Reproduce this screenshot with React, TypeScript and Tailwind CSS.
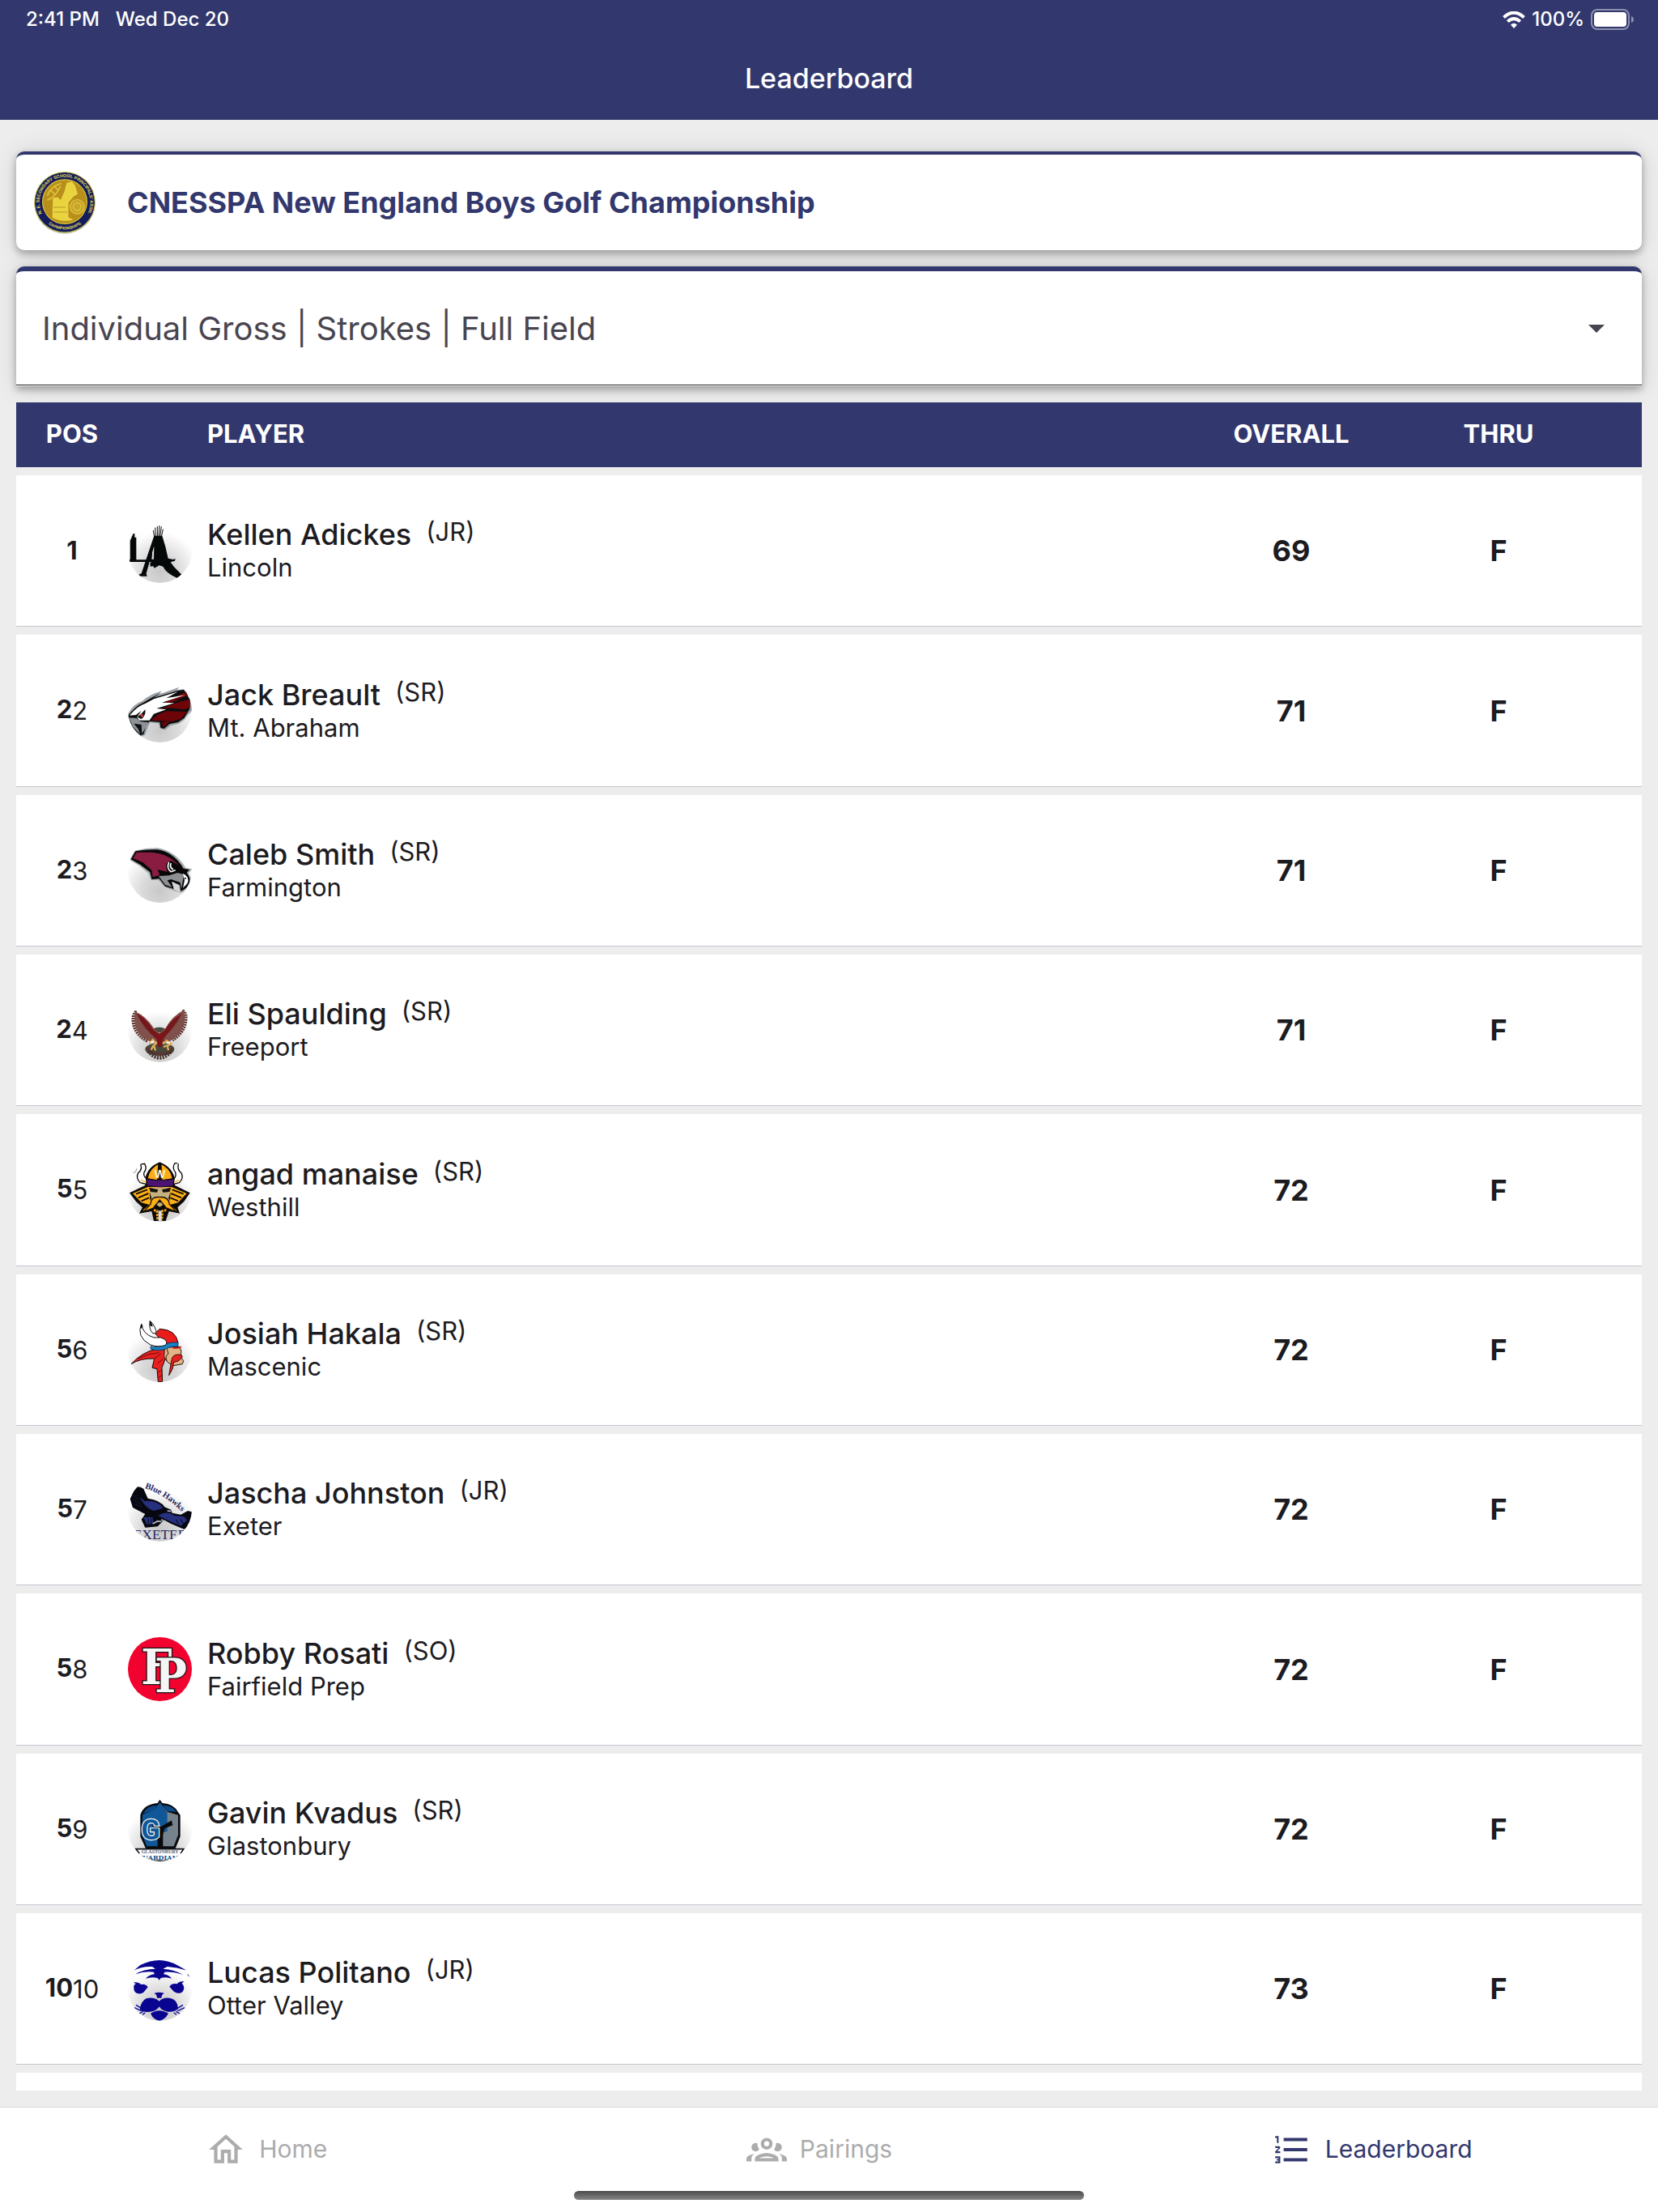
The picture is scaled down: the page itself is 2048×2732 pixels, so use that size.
import type { ReactNode } from "react";

function Mark({ top, id, shade = true, children }: { top: number; id: string; shade?: boolean; children: ReactNode }) {
  return (
    <svg viewBox={`54 ${top} 237 237`} className="size-[79px] rounded-full" aria-hidden="true">
      {shade && (
        <>
          <radialGradient id={id} cx="0.5" cy="0.82" r="0.62">
            <stop offset="0" stopColor="#c8c8c8" />
            <stop offset="0.45" stopColor="#dadada" />
            <stop offset="1" stopColor="#ffffff" />
          </radialGradient>
          <rect x="54" y={top} width="237" height="237" fill={`url(#${id})`} />
        </>
      )}
      {children}
    </svg>
  );
}

const lincoln = (
  <Mark top={30} id="m1">
    <text x="44" y="188" fontFamily="Liberation Serif" fontWeight="700" fontSize="160" fill="#050808">L</text>
    <path d="M50 60 H78 L74 84 L62 112 V180 H50 Z M79 78 H112 V98 H79 Z" fill="#fdfdfd" />
    <path
      d="M151 92 L181 92 Q194 130 203 176 L222 180 L230 177 L228 185 L212 190 L224 206 L253 236 L237 249 Q216 240 202 229 Q190 218 184 206 L170 202 L152 212 L148 205 L137 206 L136 194 L142 186 L134 180 L150 179 L151 130 L122 232 L125 242 L95 242 L94 236 L104 232 Z"
      fill="#050808"
    />
    <path d="M152 95 L148 72 M157 95 L155 62 M163 95 L163 57 M168 95 L171 54 M173 95 L178 58 M178 95 L184 68" stroke="#050808" strokeWidth="3" />
  </Mark>
);

const abraham = (
  <Mark top={621} id="m2">
    <path d="M54 752 Q75 715 108 704 Q135 680 180 667 L168 680 L244 653 L236 664 L262 660 L291 690 V738 L288 745 L275 757 L262 775 L243 788 L212 796 L192 812 L172 806 L168 788 L136 784 L128 800 L118 830 L98 838 L54 800 Z" fill="#9aa1a6" />
    <path d="M54 760 Q80 724 110 711 Q145 688 178 674 L150 692 L238 666 L262 663 L284 700 L283 734 L262 768 L240 783 L208 790 L188 807 L175 804 L172 783 L134 780 L122 794 L112 828 L100 832 L70 803 Z" fill="#0b0d0e" />
    <path d="M270 668 L278 684 L226 702 L258 700 L180 716 Z M284 698 L284 730 L262 736 L210 730 L178 734 Q230 708 284 698 Z M274 744 L250 770 L222 780 L140 776 L162 756 L196 742 Z M178 783 L210 780 L186 802 Z" fill="#6d0508" />
    <path d="M60 758 Q90 722 118 714 L150 697 L240 670 L196 694 L268 682 L180 710 L226 712 L160 732 L196 736 L150 752 L134 776 L96 776 L88 764 L104 740 L84 756 Z" fill="#ffffff" />
    <path d="M58 766 L86 768 L100 780 L130 784 L118 806 L106 826 L104 792 L76 788 L92 808 L100 828 L72 800 Z" fill="#8b9195" />
    <path d="M90 763 Q106 752 118 736 Q122 756 106 770 Q96 772 90 763 Z" fill="#0b0d0e" />
    <circle cx="106" cy="758" r="6" fill="#c33b3b" />
  </Mark>
);

const farmington = (
  <Mark top={1218} id="m3">
    <path d="M60 1296 L78 1262 Q120 1252 162 1252 Q230 1262 268 1326 L292 1330 L278 1346 Q292 1362 286 1386 Q278 1412 250 1418 L222 1410 L190 1396 L166 1370 L140 1372 L130 1346 L96 1318 Z" fill="#a5aaad" />
    <path d="M65 1294 L82 1264 Q124 1256 164 1258 Q222 1266 260 1328 L282 1332 L272 1344 Q290 1364 280 1386 Q270 1406 249 1412 L246 1390 L218 1376 L224 1404 L192 1394 L170 1366 L142 1368 L136 1342 L100 1314 Z" fill="#080809" />
    <path d="M73 1290 L86 1268 L142 1268 Q208 1274 244 1318 L216 1300 Q186 1300 200 1340 L164 1332 L172 1352 L146 1360 L142 1334 L110 1306 Z" fill="#8a1c42" />
    <path d="M206 1304 Q196 1330 214 1340 L230 1334 M214 1308 q-8 16 8 24" fill="none" stroke="#fff" strokeWidth="5" />
    <path d="M168 1356 L206 1354 L238 1344 L262 1350 Q256 1380 252 1404 L248 1380 L214 1368 L200 1372 L218 1398 L192 1388 Z" fill="#8d9194" />
    <path d="M258 1346 Q286 1360 274 1384 L258 1400 L264 1372 Z" fill="#fff" />
    <path d="M216 1378 L244 1390 L248 1416 L226 1406 Z" fill="#d6d6d6" />
    <circle cx="267" cy="1364" r="3" fill="#111" />
  </Mark>
);

const freeport = (
  <Mark top={39} id="m4">
    <ellipse cx="172" cy="228" rx="54" ry="24" fill="#46483c" />
    <path d="M122 222 Q172 270 222 222" fill="none" stroke="#5d3630" strokeWidth="8" />
    <path d="M130 234 Q172 284 216 232" fill="none" stroke="#40312c" strokeWidth="16" strokeDasharray="6 4" />
    <ellipse cx="170" cy="156" rx="24" ry="10" fill="#4a4a40" />
    <path d="M80 84 Q60 160 128 196 M262 80 Q282 150 218 192" fill="none" stroke="#5b302b" strokeWidth="16" strokeDasharray="6 3" />
    <path d="M80 88 Q120 104 150 150 L170 168 L192 152 Q218 104 262 82 Q280 158 206 200 L140 200 Q68 174 80 88 Z" fill="#80504a" />
    <path d="M84 94 Q122 112 148 156 L170 172 L190 158 Q214 116 254 96 Q226 142 200 170 L186 190 L178 220 H166 L160 190 Q116 152 84 94 Z" fill="#7b1519" />
    <path d="M96 112 Q120 160 158 184 M246 108 Q222 156 186 182 M108 116 Q130 152 154 168 M236 114 Q216 146 192 166" fill="none" stroke="#5c2020" strokeWidth="2" />
    <path d="M134 208 L146 192 L158 206 L150 214 L156 232 M148 214 L140 230 M184 208 L198 196 L214 208 L200 214 L204 232 M196 214 L186 220" fill="none" stroke="#dfae58" strokeWidth="7" />
    <path d="M138 202 l12 -4 M198 202 l12 2" stroke="#fff" strokeWidth="5" />
  </Mark>
);

const westhill = (
  <Mark top={630} id="m5">
    <path d="M60 760 L118 732 V708 Q126 664 172 646 Q218 664 228 708 V732 L284 760 L262 792 L238 814 L246 836 L206 828 L194 864 H150 L142 828 L96 836 L108 814 L84 792 Z" fill="#0c0906" />
    <path d="M72 762 L128 738 H216 L272 762 L240 796 L210 804 L236 826 L210 822 L178 790 H166 L134 822 L108 826 L134 804 L104 796 Z" fill="#fcae17" />
    <path d="M84 764 L126 748 M92 778 L130 762 M104 790 L132 778 M260 764 L218 748 M252 778 L214 762 M240 790 L212 778" stroke="#14100a" strokeWidth="6" />
    <path d="M128 706 Q134 668 172 652 Q212 668 218 706 L172 714 Z" fill="#fcae17" />
    <path d="M166 650 H178 L182 712 H162 Z" fill="#0c0906" />
    <text x="172" y="704" textAnchor="middle" fontFamily="Liberation Sans" fontWeight="700" fontSize="44" fill="#fff" stroke="#fcae17" strokeWidth="1">W</text>
    <path d="M122 708 Q172 718 226 708 L224 734 Q172 742 126 734 Z" fill="#4b1372" stroke="#170820" strokeWidth="3" />
    <path d="M134 740 H212 L206 790 L172 812 L140 790 Z" fill="#c5b07f" />
    <path d="M132 740 L166 748 L162 758 L138 756 Z M214 740 L180 748 L184 758 L208 756 Z M160 788 H186 L178 796 H166 Z M134 756 L142 780 L136 788 Z M212 756 L204 780 L210 788 Z" fill="#16100a" />
    <path d="M138 802 Q140 772 170 776 Q204 772 208 802 L234 830 L196 816 L172 786 L148 816 L112 830 Z" fill="#fcae17" stroke="#16100a" strokeWidth="4" />
    <path d="M150 824 L162 826 L164 862 M196 824 L182 826 L180 862" stroke="#fcae17" strokeWidth="8" strokeDasharray="8 4" fill="none" />
    <path d="M167 826 h12 v38 h-12z" fill="#ddd" />
    <path d="M122 706 L124 728 L100 722 Q82 706 92 686 Q110 672 100 654 L116 652 Q126 668 114 684 Q110 698 122 706 Z M226 706 L222 728 L244 722 Q262 706 252 686 Q234 672 242 650 L228 650 Q216 668 230 684 Q234 698 226 706 Z" fill="#fff" stroke="#0c0906" strokeWidth="4" />
    <path d="M102 712 l18 8 M244 712 l-18 8" stroke="#fcae17" strokeWidth="4" />
    <path d="M72 684 q12 4 14 -14" fill="none" stroke="#8b8b96" strokeWidth="3" />
  </Mark>
);

const mascenic = (
  <Mark top={48} id="m6">
    <path d="M66 218 Q104 176 158 162 L196 160 L192 200 L180 232 L182 284 H166 L162 236 L144 232 L152 198 Q100 196 66 218 Z" fill="#e8201f" stroke="#1a0808" strokeWidth="3" />
    <path d="M90 198 Q130 178 170 176 M152 198 L176 180 M164 216 L184 200 M166 250 l14 -12 M168 268 l14 -10" stroke="#6d0d0e" strokeWidth="3" fill="none" />
    <path d="M190 156 L246 154 L252 172 L248 190 L260 206 L256 218 L222 224 L202 212 L188 192 Z" fill="#e3b486" stroke="#2b1a12" strokeWidth="3" />
    <path d="M198 160 l6 20 q-14 8 -6 26" fill="none" stroke="#2b1a12" strokeWidth="3" />
    <path d="M252 184 Q220 178 216 202 L206 260 Q224 236 224 210 Q238 214 256 192 Z" fill="#e8201f" stroke="#3b0a0a" strokeWidth="3" />
    <path d="M214 158 L254 152 L248 160 L226 162 Z" fill="#c91919" />
    <path d="M154 104 L172 88 Q232 90 240 140 L192 146 Z" fill="#ea1c1c" stroke="#200808" strokeWidth="3" />
    <path d="M190 144 Q214 136 240 138 L240 153 Q210 152 190 164 Q160 172 138 162 V152 Q170 160 190 144 Z" fill="#1581c6" stroke="#0a1c30" strokeWidth="2" />
    <path d="M104 68 Q108 108 150 120 L176 120 Q206 130 194 148 Q164 158 136 146 Q84 118 104 68 Z M136 58 Q156 76 160 104 L146 104 Q130 88 136 58 Z" fill="#fff" stroke="#111" strokeWidth="3" />
    <path d="M134 58 q10 6 12 22 l-10 -4 z M102 68 l8 10 l-8 10 z" fill="#111" />
  </Mark>
);

const exeter = (
  <Mark top={645} id="m7">
    <path d="M62 724 L82 680 Q96 676 112 686 L128 722 Q174 728 190 754 L214 764 L218 776 L250 782 L276 768 L292 772 L284 826 L262 836 L214 816 L188 802 L164 826 L118 830 L104 800 L118 780 L72 756 Z" fill="#07080f" />
    <path d="M98 716 L116 732 Q164 728 184 758 L150 768 Q118 760 98 716 Z M166 786 Q196 764 226 786 L264 790 L272 804 L250 824 L204 804 Z M112 792 L146 792 L148 816 L124 818 Z" fill="#27307e" />
    <path d="M70 708 l24 18 M72 724 l26 18 M78 742 l30 12 M130 796 v22 M140 796 v20 M232 800 l12 22 M248 798 l12 20 M264 790 l14 16" stroke="#10132e" strokeWidth="4" />
    <path d="M146 816 l18 -10 l14 2 M178 800 l10 8 M200 768 l14 2" stroke="#b9bcc5" strokeWidth="5" fill="none" />
    <path id="hawk-arc" d="M116 684 Q190 706 262 780" fill="none" />
    <text fontFamily="Liberation Serif" fontWeight="700" fontSize="32" fill="#25275f">
      <textPath href="#hawk-arc">Blue Hawks</textPath>
    </text>
    <text x="174" y="874" textAnchor="middle" fontFamily="Liberation Serif" fontSize="52" fill="#25275f">EXETER</text>
  </Mark>
);

const fairfield = (
  <Mark top={65} id="m8" shade={false}>
    <rect x="54" y="65" width="237" height="237" fill="#f2022f" />
    <g fontFamily="DejaVu Serif Condensed, DejaVu Serif" fontWeight="700" fill="#f5f5f5" stroke="#1c1416" strokeWidth="8" paintOrder="stroke" strokeLinejoin="miter">
      <text x="103" y="238" fontSize="180">F</text>
      <text x="154" y="268" fontSize="176">P</text>
    </g>
  </Mark>
);

const glastonbury = (
  <Mark top={655} id="m9">
    <path d="M172 663 L182 676 Q224 678 240 710 L248 720 V800 L230 844 H120 L100 800 V720 Q112 680 164 676 Z" fill="#0a0c0f" />
    <path d="M110 714 Q126 684 162 684 L150 704 Z M184 684 Q218 684 234 708 L200 706 Z" fill="#0d4c8c" />
    <path d="M172 674 L200 708 L240 720 V794 L224 836 H184 V790 L176 782 Z" fill="#77838c" />
    <path d="M172 674 L150 702 L108 718 V796 L124 836 H164 V790 L176 786 L200 780 V712 Z" fill="#0f5796" />
    <path d="M140 752 L176 764 L216 740 L220 758 L190 770 L182 800 V840 H170 V800 Z" fill="#080a0c" />
    <text x="103" y="812" fontFamily="Roboto" fontWeight="700" fontSize="104" fill="#0f5796" stroke="#fff" strokeWidth="7" paintOrder="stroke">G</text>
    <path d="M84 846 H260 L250 862 L256 872 H90 L96 862 Z" fill="#fff" stroke="#101318" strokeWidth="5" />
    <text x="173" y="861" textAnchor="middle" fontFamily="Liberation Serif" fontWeight="700" fontSize="18" fill="#59636c">GLASTONBURY</text>
    <rect x="96" y="863" width="154" height="30" fill="#fff" />
    <text x="172" y="885" textAnchor="middle" fontFamily="DejaVu Serif" fontWeight="700" fontSize="24" fill="#134f8c">GUARDIANS</text>
    <path d="M134 890 H206" stroke="#101318" strokeWidth="5" />
  </Mark>
);

const otter = (
  <Mark top={1252} id="m10">
    <g fill="#0a0590">
      <path d="M100 1282 Q136 1264 170 1264 Q204 1264 240 1284 L272 1302 Q236 1290 200 1288 L184 1296 Q226 1298 258 1318 Q222 1306 190 1308 L186 1316 Q206 1318 216 1332 Q196 1324 176 1330 L170 1338 L164 1330 Q142 1324 120 1332 Q132 1318 152 1316 L150 1308 Q116 1304 82 1316 Q112 1296 156 1296 L144 1288 Q104 1286 76 1302 Z" />
      <path d="M74 1346 Q94 1344 102 1354 Q120 1350 128 1364 L118 1376 Q110 1390 94 1388 Q76 1386 76 1368 Q74 1354 84 1352 Z M262 1342 Q244 1342 236 1352 Q216 1348 208 1362 L220 1376 Q230 1388 246 1386 Q260 1384 262 1366 Q260 1354 254 1350 Z" />
      <path d="M152 1386 Q170 1380 188 1386 L180 1394 L178 1404 H162 L160 1394 Z" />
      <path d="M170 1416 Q150 1398 122 1406 Q102 1416 98 1446 Q112 1460 144 1454 Q162 1450 170 1436 Q180 1452 202 1455 Q230 1456 240 1444 Q238 1410 212 1405 Q186 1400 170 1416 Z" />
      <path d="M138 1462 Q170 1440 204 1462 Q188 1488 170 1488 Q150 1486 138 1462 Z" />
    </g>
    <path d="M78 1440 l26 12 M84 1430 l20 12 M96 1462 l14 -8 M108 1466 l10 -8 M264 1440 l-26 12 M258 1430 l-20 12 M246 1462 l-14 -8 M234 1466 l-10 -8" stroke="#0a0590" strokeWidth="4" />
    <path d="M276 1316 l6 8" stroke="#0a0590" strokeWidth="4" />
  </Mark>
);

const players = [
  { pos: "1", order: "", name: "Kellen Adickes", year: "JR", school: "Lincoln", score: 69, logo: lincoln },
  { pos: "2", order: "2", name: "Jack Breault", year: "SR", school: "Mt. Abraham", score: 71, logo: abraham },
  { pos: "2", order: "3", name: "Caleb Smith", year: "SR", school: "Farmington", score: 71, logo: farmington },
  { pos: "2", order: "4", name: "Eli Spaulding", year: "SR", school: "Freeport", score: 71, logo: freeport },
  { pos: "5", order: "5", name: "angad manaise", year: "SR", school: "Westhill", score: 72, logo: westhill },
  { pos: "5", order: "6", name: "Josiah Hakala", year: "SR", school: "Mascenic", score: 72, logo: mascenic },
  { pos: "5", order: "7", name: "Jascha Johnston", year: "JR", school: "Exeter", score: 72, logo: exeter },
  { pos: "5", order: "8", name: "Robby Rosati", year: "SO", school: "Fairfield Prep", score: 72, logo: fairfield },
  { pos: "5", order: "9", name: "Gavin Kvadus", year: "SR", school: "Glastonbury", score: 72, logo: glastonbury },
  { pos: "10", order: "10", name: "Lucas Politano", year: "JR", school: "Otter Valley", score: 73, logo: otter },
];

const tabs = [
  {
    label: "Home",
    active: false,
    path: "M12 5.69L17 10.19V18H15V12H9V18H7V10.19L12 5.69M12 3L2 12H5V20H11V14H13V20H19V12H22L12 3Z",
  },
  {
    label: "Pairings",
    active: false,
    path: "M12,5A3.5,3.5 0 0,0 8.5,8.5A3.5,3.5 0 0,0 12,12A3.5,3.5 0 0,0 15.5,8.5A3.5,3.5 0 0,0 12,5M12,7A1.5,1.5 0 0,1 13.5,8.5A1.5,1.5 0 0,1 12,10A1.5,1.5 0 0,1 10.5,8.5A1.5,1.5 0 0,1 12,7M5.5,8A2.5,2.5 0 0,0 3,10.5C3,11.44 3.53,12.25 4.29,12.68C4.65,12.88 5.06,13 5.5,13C5.94,13 6.35,12.88 6.71,12.68C7.08,12.47 7.39,12.17 7.62,11.81C6.89,10.86 6.5,9.7 6.5,8.5C6.5,8.41 6.5,8.31 6.5,8.22C6.2,8.08 5.86,8 5.5,8M18.5,8C18.14,8 17.8,8.08 17.5,8.22C17.5,8.31 17.5,8.41 17.5,8.5C17.5,9.7 17.11,10.86 16.38,11.81C16.5,12 16.63,12.15 16.78,12.3C16.94,12.45 17.1,12.58 17.29,12.68C17.65,12.88 18.06,13 18.5,13C18.94,13 19.35,12.88 19.71,12.68C20.47,12.25 21,11.44 21,10.5A2.5,2.5 0 0,0 18.5,8M12,14C9.66,14 5,15.17 5,17.5V19H19V17.5C19,15.17 14.34,14 12,14M4.71,14.55C2.78,14.78 0,15.76 0,17.5V19H3V17.07C3,16.06 3.69,15.22 4.71,14.55M19.29,14.55C20.31,15.22 21,16.06 21,17.07V19H24V17.5C24,15.76 21.22,14.78 19.29,14.55M12,16C13.53,16 15.24,16.5 16.23,17H7.77C8.76,16.5 10.47,16 12,16Z",
  },
  {
    label: "Leaderboard",
    active: true,
    path: "M7,13V11H21V13H7M7,19V17H21V19H7M7,7V5H21V7H7M3,8V5H2V4H4V8H3M2,17V16H5V20H2V19H4V18.5H3V17.5H4V17H2M4.25,10A0.75,0.75 0 0,1 5,10.75C5,10.95 4.92,11.14 4.79,11.27L3.12,13H5V14H2V13.08L4,11H2V10H4.25Z",
  },
];

function Seal() {
  return (
    <svg viewBox="36 39 222 226" className="h-[77px] w-[76px] shrink-0" aria-hidden="true">
      <defs>
        <path id="seal-top" d="M75 208 A 92 92 0 1 1 219 208" />
        <path id="seal-bottom" d="M78 221 A 99 99 0 0 0 216 221" />
      </defs>
      <circle cx="147" cy="154" r="110" fill="#bdbdbd" />
      <circle cx="147" cy="150" r="111" fill="#c9c445" />
      <circle cx="147" cy="150" r="108" fill="#141c5c" />
      <circle cx="147" cy="148" r="82" fill="#e3d33c" />
      <circle cx="147" cy="148" r="79" fill="#b98f1c" />
      <path d="M84 126 Q96 92 134 82 M84 142 Q112 132 132 92 M92 104 l22 20 M108 90 l16 18" fill="none" stroke="#dcc03a" strokeWidth="5" />
      <path d="M104 134 L122 132 L132 142 L146 110 L154 80 L172 74 L184 88 L194 120 L178 130 L160 152 L160 204 L178 214 Q140 224 102 206 Z" fill="#e9d440" />
      <circle cx="192" cy="166" r="26" fill="#c9a52a" stroke="#e2cc40" strokeWidth="3" />
      <circle cx="192" cy="166" r="14" fill="none" stroke="#e2cc40" strokeWidth="3" />
      <path d="M106 168 H150 M106 186 H158" stroke="#bd9a26" strokeWidth="3" />
      <g fontFamily="Liberation Sans" fontWeight="700" fill="#e6de5a" textAnchor="middle">
        <text fontSize="16"><textPath href="#seal-top" startOffset="50%">N. E. SECONDARY SCHOOL PRINCIPALS’ ASSN.</textPath></text>
        <text fontSize="15"><textPath href="#seal-bottom" startOffset="50%">CHAMPIONSHIPS</textPath></text>
      </g>
    </svg>
  );
}

export default function App() {
  return (
    <div className="flex h-screen flex-col overflow-hidden bg-[#ededed] font-['Inter',sans-serif] text-[#1c1b1f]">
      <header className="bg-[#32386d] text-white">
        <div className="flex h-12 items-center justify-between pr-[29px] pl-8 text-[24px] font-medium">
          <div className="flex gap-5">
            <span>2:41 PM</span>
            <span>Wed Dec 20</span>
          </div>
          <div className="flex items-center gap-2">
            <svg viewBox="0 0 28 21" className="h-[21px] w-7" aria-label="Wi-Fi">
              <path d="M1.5 7.5 Q14 -4 26.5 7.5" fill="none" stroke="#fff" strokeWidth="4" />
              <path d="M6.3 12.6 Q14 5.5 21.7 12.6" fill="none" stroke="#fff" strokeWidth="4" />
              <path d="M10 16.7 Q14 13 18 16.7 L14 21 Z" fill="#fff" />
            </svg>
            <span>100%</span>
            <svg viewBox="0 0 54 26" className="h-[26px] w-[54px]" aria-label="Battery full">
              <rect x="1" y="1" width="46" height="24" rx="7" fill="none" stroke="#8d91b0" strokeWidth="2" />
              <rect x="4" y="4" width="40" height="18" rx="4" fill="#fff" />
              <path d="M50 9 Q53 10 53 13 T50 17 Z" fill="#8d91b0" />
            </svg>
          </div>
        </div>
        <h1 className="flex h-[100px] items-center justify-center pb-[3px] text-[34px] font-medium">Leaderboard</h1>
      </header>

      <main className="flex min-h-0 flex-1 flex-col px-5 pt-[39px] pb-5">
        <section className="flex h-[122px] shrink-0 items-center gap-[39px] rounded-[10px] border-t-4 border-[#32386d] bg-white pl-[22px] shadow-[0_4px_10px_rgba(0,0,0,0.3),0_2px_30px_rgba(0,0,0,0.12)]">
          <Seal />
          <h2 className="text-[36px] font-bold text-[#32386d]">CNESSPA New England Boys Golf Championship</h2>
        </section>

        <div className="mt-5 shrink-0 rounded-t-[10px] border-t-[6px] border-[#32386d] bg-white pb-px shadow-[0_4px_10px_rgba(0,0,0,0.3),0_2px_30px_rgba(0,0,0,0.12)]">
          <div className="relative border-b border-[#1c1b1f]">
            <select aria-label="Leaderboard view" className="h-[140px] w-full appearance-none bg-transparent px-8 pt-0.5 text-[40px] text-[#49454f]">
              <option>Individual Gross | Strokes | Full Field</option>
            </select>
            <svg viewBox="0 0 20 10" className="pointer-events-none absolute top-[66px] right-[46px] h-2.5 w-5" aria-hidden="true">
              <path d="M0 0H20L10 10Z" fill="#49454f" />
            </svg>
          </div>
        </div>

        <div className="mt-2.5 min-h-0 flex-1 overflow-hidden">
          <table className="w-full table-fixed border-separate border-spacing-x-0 border-spacing-y-2.5">
            <colgroup>
              <col className="w-[138px]" />
              <col className="w-[98px]" />
              <col />
              <col className="w-64" />
              <col className="w-64" />
              <col className="w-[49px]" />
            </colgroup>
            <thead>
              <tr className="h-20 bg-[#32386d] text-[31px] text-white *:p-0 *:pb-0.5">
                <th scope="col" className="font-bold">POS</th>
                <td />
                <th scope="col" className="text-left font-bold">PLAYER</th>
                <th scope="col" className="font-bold">OVERALL</th>
                <th scope="col" className="font-bold">THRU</th>
                <td />
              </tr>
            </thead>
            <tbody>
              {players.map((p) => (
                <tr key={p.name} className="h-[187px] bg-white nth-[3n+2]:h-[188px] *:border-b *:border-[#c8c5d0] *:p-0">
                  <td>
                    <div className="flex justify-center text-[31px]">
                      <b className="font-bold">{p.pos}</b>
                      {p.order && <span className="pt-0.5">{p.order}</span>}
                    </div>
                  </td>
                  <td>{p.logo}</td>
                  <td>
                    <div className="flex items-start gap-[18px]">
                      <span className="text-[36px] leading-[42px] font-medium">{p.name}</span>
                      <span className="text-[31px] leading-9">({p.year})</span>
                    </div>
                    <div className="text-[31px] leading-10">{p.school}</div>
                  </td>
                  <td className="text-center text-[36px] font-bold">{p.score}</td>
                  <td className="text-center text-[36px] font-bold">F</td>
                  <td />
                </tr>
              ))}
              <tr className="h-[188px] bg-white">
                <td colSpan={6} />
              </tr>
            </tbody>
          </table>
        </div>
      </main>

      <footer className="flex flex-col items-center border-t border-[#d8d8d8] bg-white">
        <nav className="grid h-[103px] w-full grid-cols-3">
          {tabs.map((t) => (
            <a
              key={t.label}
              href="#"
              aria-current={t.active ? "page" : undefined}
              className={
                t.active
                  ? "flex items-center justify-center gap-4 pr-6 text-[30px] text-[#32386d]"
                  : "flex items-center justify-center gap-4 pr-6 text-[30px] text-[#acacad]"
              }
            >
              <svg viewBox="0 0 24 24" className="size-[50px]" fill="currentColor" aria-hidden="true">
                <path d={t.path} />
              </svg>
              {t.label}
            </a>
          ))}
        </nav>
        <div className="mb-[15px] h-[11px] w-[630px] rounded-full bg-linear-to-b from-[#4c4c4c] to-[#868686]" />
      </footer>
    </div>
  );
}
